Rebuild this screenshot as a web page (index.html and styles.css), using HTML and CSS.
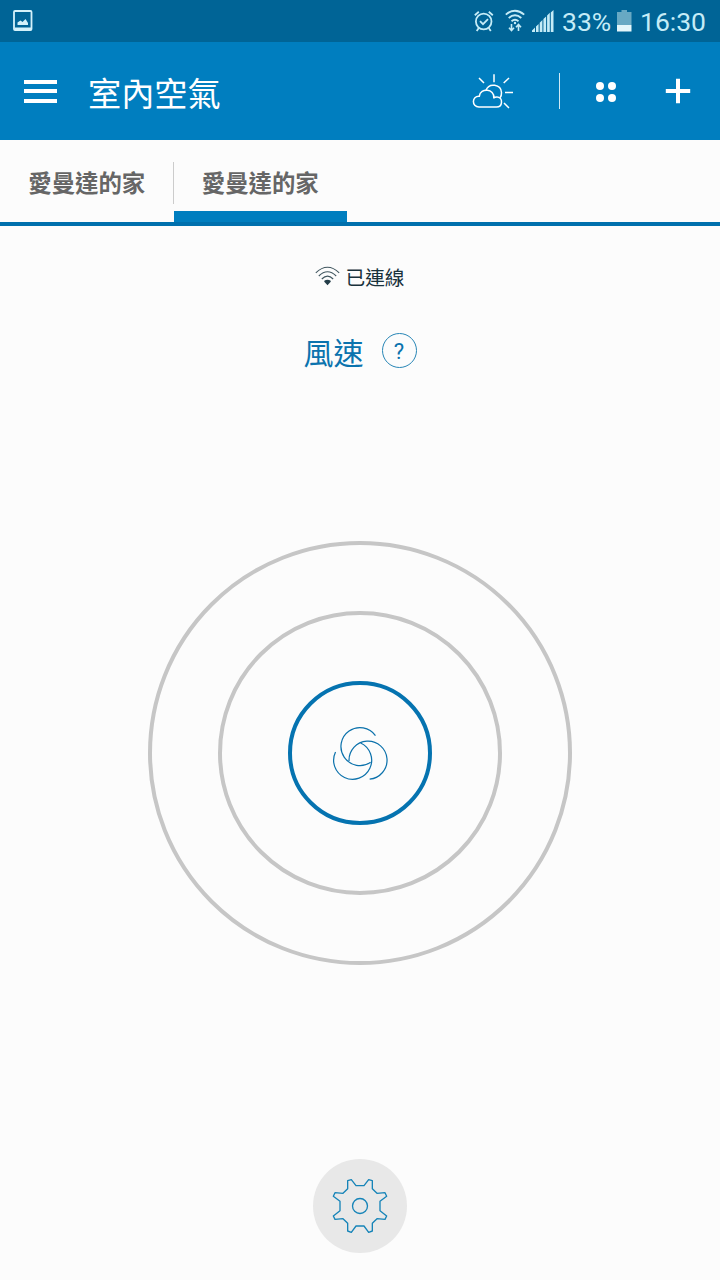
FILE: index.html
```html
<!DOCTYPE html>
<html lang="zh-Hant">
<head>
    <meta charset="UTF-8">
    <meta name="viewport" content="width=device-width, initial-scale=1.0">
    <title>室內空氣</title>
    <link rel="stylesheet" href="styles.css">
</head>
<body>
    <div class="status-bar">
        <svg class="icon-picture" width="20" height="22" viewBox="0 0 20 22">
            <rect x="1" y="1" width="17.5" height="19" rx="1" fill="none" stroke="#d3f1fa" stroke-width="1.8"/>
            <path d="M1.5 17.5h16.5v2.5H1.5z" fill="#d3f1fa"/>
            <path d="M4.5 15v-2.5l3-2 2 1.5 3-3 2.5 4V15z" fill="#d3f1fa"/>
        </svg>
        <div class="status-right">
            <svg width="20" height="22" viewBox="0 0 20 22" fill="none" stroke="#c5ecf7" stroke-width="1.8">
                <circle cx="9.7" cy="11.5" r="7.8"/>
                <path d="M.8 5.2 4.8 1.8M14.8 1.8l4 3.4M4.8 18 2.7 21M14.7 18l2.1 3M6 11.2l3 3 5-5"/>
            </svg>
            <svg class="icon-wifi" width="20" height="24" viewBox="0 0 20 24" fill="none" stroke="#c5ecf7" stroke-width="1.9">
                <path d="M.8 5.6Q10-2.2 19.2 5.6M3.7 9Q10 3.7 16.3 9M6.5 12.2Q10 9.5 13.5 12.2"/>
                <circle cx="10" cy="14" r="1.2" fill="#c5ecf7" stroke="none"/>
                <path d="M6.5 15v6M4 18.8l2.5 2.7L9 18.8M13.5 22v-6M11 18.2l2.5-2.7 2.5 2.7" stroke-width="1.6"/>
            </svg>
            <svg class="icon-signal" width="22" height="22" viewBox="0 0 22 22" fill="#c5ecf7">
                <path d="M0 22v-1.5l3-3V22zM4 22v-5.5l2.6-2.6V22zM7.7 22v-9.2l2.7-2.7V22zM11.4 22V9.1l2.7-2.7V22zM15.1 22V5.4l2.7-2.7V22zM18.8 22V2.5L21.5 0V22z"/>
            </svg>
            <span class="battery-text">33%</span>
            <svg class="icon-battery" width="15" height="22" viewBox="0 0 15 22">
                <path d="M0 2h4.5V0h5.5v2h4.5v13H0z" fill="#68a9c3"/>
                <path d="M0 15h14.5v6.5H0z" fill="#e4f6fa"/>
            </svg>
            <span class="clock">16:30</span>
        </div>
    </div>

    <header class="app-bar">
        <div class="menu-btn">
            <span></span>
            <span></span>
            <span></span>
        </div>
        <h1>室內空氣</h1>
        <svg class="icon-weather" width="42" height="36" viewBox="0 0 42 36" fill="none" stroke="#fff" stroke-width="1.5" stroke-linejoin="round">
            <path d="M7 34h17.5c6.5 0 6.5-9.5 1-10-1.5-.2-2.7.1-3.7.9 1-9.4-13.5-10.5-14.5-1.6C-.5 22.8-.5 34 7 34z"/>
            <path d="M14 17.3c3-8 15-6 15.5 2.200.1 2.200-.5 4-1.400 5.300"/>
            <path d="M22 1.2v8M7 5l5 5M37 5l-5.3 5M33 19.500h8M32 30l5 5"/>
        </svg>
        <div class="divider"></div>
        <div class="dots">
            <span></span>
            <span></span>
            <span></span>
            <span></span>
        </div>
        <svg class="icon-plus" width="26" height="26" viewBox="0 0 26 26">
            <path d="M.8 13h24.4M13 .8v24.4" stroke="#fff" stroke-width="4"/>
        </svg>
    </header>

    <nav class="tabs">
        <div class="tab">愛曼達的家</div>
        <div class="tab active">愛曼達的家</div>
    </nav>

    <main>
        <div class="connection">
            <svg width="25" height="20" viewBox="0 0 25 20" fill="none" stroke="#40565f" stroke-width="1.1">
                <path d="M.8 6.8Q12.500-4.300 24.200 6.800M3.800 10Q12.500 1.500 21.200 10M6.800 13Q12.500 7.300 18.200 13"/>
                <path d="M9.300 14.800q3.200-2.200 6.400 0v1l-3.200 3.400-3.200-3.400z" fill="#233d48" stroke="none"/>
            </svg>
            <span>已連線</span>
        </div>

        <div class="mode">
            <h2>風速</h2>
            <div class="help">?</div>
        </div>

        <div class="ring ring-outer">
            <div class="ring ring-middle">
                <div class="ring ring-inner">
                    <svg width="58" height="58" viewBox="150 150 180 180" fill="none" stroke="#0c72ac" stroke-width="3.8">
                        <path d="M288 186A59 59 0 1 0 273 269"/>
                        <path d="M270 321A59 59 0 1 0 206 265"/>
                        <path d="M164 237A59 59 0 1 0 242 209"/>
                    </svg>
                </div>
            </div>
        </div>

        <div class="settings">
            <svg width="60" height="60" viewBox="75 79 180 180" fill="none" stroke="#1684b8" stroke-width="4" stroke-linejoin="round">
                <path d="M153 108h24l14-18 11 3v24l14 14 24-2 5 11-20 15v28l20 16-5 10-24-2-14 14v23l-11 4-14-19h-24l-14 19-11-4v-23l-14-14-24 2-5-10 20-16v-28L85 140l5-11 24 2 14-14V93l11-3z"/>
                <circle cx="165" cy="169" r="22.5"/>
            </svg>
        </div>
    </main>
</body>
</html>
```
FILE: styles.css
```css
* {
    box-sizing: border-box;
}

body {
    margin: 0;
    height: 1280px;
    display: flex;
    flex-direction: column;
    overflow: hidden;
    background-color: #fcfcfc;
    font-family: "Noto Sans CJK TC", sans-serif;
}

h1, h2 {
    margin: 0;
    font-weight: normal;
}

.status-bar {
    height: 42px;
    padding: 0 14px 0 13px;
    display: flex;
    align-items: center;
    justify-content: space-between;
    background-color: #006496;
    color: #c5ecf7;
    font-family: Roboto, sans-serif;
    font-size: 26.5px;
}

.status-right {
    display: flex;
    align-items: center;
}

.icon-wifi {
    margin-left: 11px;
}

.icon-signal {
    margin-left: 7px;
}

.battery-text {
    width: 49px;
    margin-left: 8px;
}

.icon-battery {
    margin: 0 8px 0 6px;
}

.app-bar {
    height: 98px;
    padding: 0 29px 0 24px;
    display: flex;
    align-items: center;
    background-color: #007ebf;
    color: #fff;
}

.menu-btn {
    width: 33px;
    height: 23px;
    display: flex;
    flex-direction: column;
    justify-content: space-between;
}

.menu-btn span {
    height: 4px;
    background-color: #fff;
}

.app-bar h1 {
    margin: 2px 0 0 31px;
    font-size: 33.2px;
    line-height: 48px;
}

.icon-weather {
    margin-left: auto;
}

.divider {
    width: 1px;
    height: 36px;
    margin: 0 36px 0 45px;
    background-color: #cfe9f5;
}

.dots {
    display: grid;
    grid-template-columns: 8px 8px;
    gap: 4px;
    margin: 1px 49px 0 0;
}

.dots span {
    width: 8px;
    height: 8px;
    border-radius: 50%;
    background-color: #fff;
}

.tabs {
    height: 86px;
    display: flex;
    border-bottom: 4px solid #0070ad;
}

.tab {
    width: 173.5px;
    display: flex;
    align-items: center;
    justify-content: center;
    border-bottom: 11px solid transparent;
    padding-top: 12px;
    font-size: 23.4px;
    font-weight: 700;
    line-height: 34px;
    color: #666;
    background: linear-gradient(#ccc, #ccc) right 22px / 1px 42px no-repeat;
}

.tab.active {
    border-bottom-color: #007ebf;
    background: none;
}

main {
    flex: 1;
    display: flex;
    flex-direction: column;
    align-items: center;
}

.connection {
    height: 30px;
    margin-top: 35px;
    display: flex;
    align-items: center;
    gap: 5px;
    font-size: 19.7px;
    color: #19323c;
}

.mode {
    height: 44px;
    margin-top: 38px;
    display: flex;
    align-items: center;
    gap: 18px;
    color: #0b73ae;
}

.mode h2 {
    font-size: 30px;
    line-height: 44px;
}

.help {
    width: 35px;
    height: 35px;
    display: flex;
    align-items: center;
    justify-content: center;
    margin-bottom: 1px;
    padding-top: 2px;
    border: 1px solid #2886b6;
    border-radius: 50%;
    font-family: Roboto, sans-serif;
    font-size: 22px;
}

.ring {
    display: flex;
    align-items: center;
    justify-content: center;
    border: 4px solid #c6c6c6;
    border-radius: 50%;
}

.ring-outer {
    width: 424px;
    height: 424px;
    margin-top: 167.5px;
}

.ring-middle {
    width: 284px;
    height: 284px;
}

.ring-inner {
    width: 144px;
    height: 144px;
    border-color: #0573b0;
}

.settings {
    width: 94px;
    height: 94px;
    margin-top: 194.5px;
    display: flex;
    align-items: center;
    justify-content: center;
    border-radius: 50%;
    background-color: #e8e8e8;
}
```
